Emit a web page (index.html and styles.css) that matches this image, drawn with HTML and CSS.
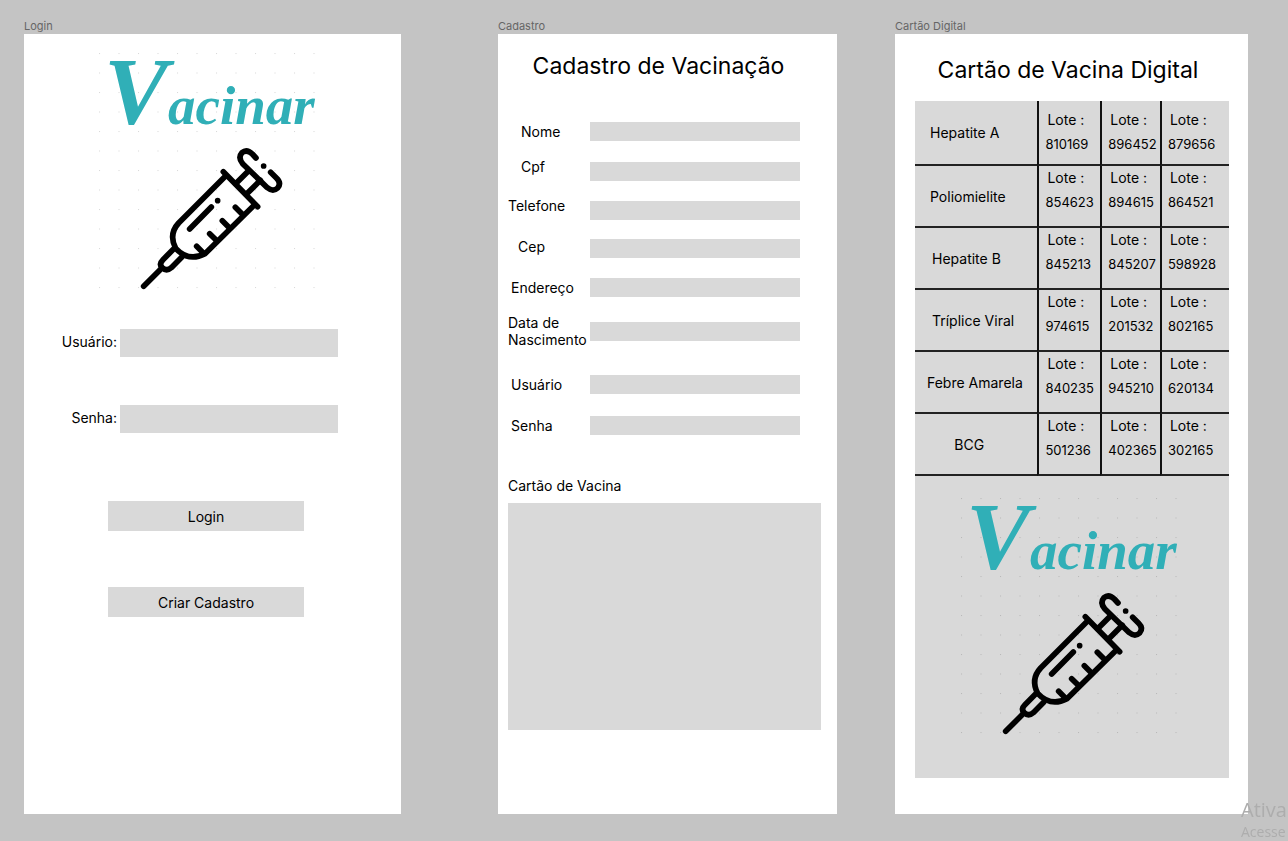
FILE: index.html
```html
<!DOCTYPE html>
<html lang="pt-BR">
<head>
<meta charset="utf-8">
<meta name="viewport" content="width=device-width, initial-scale=1">
<title>Vacinar</title>
<link rel="stylesheet" href="styles.css">
</head>
<body>
<main class="board">
  <section class="frame frame-login">
    <p class="frame-name">Login</p>
    <div class="screen">
      <svg class="logo" viewBox="0 0 240 270" role="img" aria-label="Vacinar">
        <defs>
          <pattern id="dots" x="9" y="19" width="19.5" height="19.5" patternUnits="userSpaceOnUse">
            <rect class="dot" width="1" height="1"/>
          </pattern>
          <g id="brand">
            <rect x="9" y="19" width="217" height="236" fill="url(#dots)"/>
            <text class="wordmark" x="14" y="90"><tspan class="wordmark-initial">V</tspan>acinar</text>
            <g class="syringe" transform="translate(0 101) scale(.3333)">
              <path d="M161 454L215 400"/>
              <path d="M250 343L219 374Q206 387 216 397Q229 411 244 398L275 367"/>
              <path d="M406 124L266 264Q235 298 257 340Q296 382 345 356L494 209"/>
              <path d="M400 110L503 215"/>
              <path d="M436 217L457 238M397 257L418 278M359 296L379 316M320 334L340 354"/>
              <path d="M299 282L364 216M383 197v.1"/>
              <path d="M437 146L476 107M472 175L511 136"/>
              <path d="M498 69L487 57Q470 41 456 53Q443 68 458 86L532 158Q549 172 563 159Q575 145 560 130L542 112M521 93v.1"/>
            </g>
          </g>
        </defs>
        <use href="#brand"/>
      </svg>
      <form class="login-form">
        <div class="login-row"><label class="lifted" for="login-user">Usuário:</label><input id="login-user" type="text"></div>
        <div class="login-row"><label class="lifted" for="login-pass">Senha:</label><input id="login-pass" type="password"></div>
        <div class="actions">
          <button type="submit">Login</button>
          <button type="button">Criar Cadastro</button>
        </div>
      </form>
    </div>
  </section>

  <section class="frame frame-signup">
    <p class="frame-name">Cadastro</p>
    <div class="screen">
      <h1>Cadastro de Vacinação</h1>
      <form class="signup-form">
        <div class="row"><label class="indent-l" for="nome">Nome</label><input id="nome" type="text"></div>
        <div class="row"><label class="indent-l raised" for="cpf">Cpf</label><input id="cpf" type="text"></div>
        <div class="row row-short"><label class="raised" for="tel">Telefone</label><input id="tel" type="tel"></div>
        <div class="row row-short"><label class="indent-m lifted" for="cep">Cep</label><input id="cep" type="text"></div>
        <div class="row"><label class="indent-s" for="end">Endereço</label><input id="end" type="text"></div>
        <div class="row row-tall"><label for="nasc">Data de<br>Nascimento</label><input id="nasc" type="text"></div>
        <div class="row row-spaced"><label class="indent-s" for="user">Usuário</label><input id="user" type="text"></div>
        <div class="row row-last"><label class="indent-s" for="pass">Senha</label><input id="pass" type="password"></div>
      </form>
      <h2>Cartão de Vacina</h2>
      <div class="card-preview"></div>
    </div>
  </section>

  <section class="frame frame-card">
    <p class="frame-name">Cartão Digital</p>
    <div class="screen">
      <h1>Cartão de Vacina Digital</h1>
      <div class="card">
        <table>
          <colgroup><col class="col-name"><col class="col-a"><col class="col-b"><col class="col-c"></colgroup>
          <tbody>
            <tr class="first"><th scope="row">Hepatite A</th><td><span>Lote :</span>810169</td><td><span>Lote :</span>896452</td><td><span>Lote :</span>879656</td></tr>
            <tr><th scope="row">Poliomielite</th><td><span>Lote :</span>854623</td><td><span>Lote :</span>894615</td><td><span>Lote :</span>864521</td></tr>
            <tr><th class="inset" scope="row">Hepatite B</th><td><span>Lote :</span>845213</td><td><span>Lote :</span>845207</td><td><span>Lote :</span>598928</td></tr>
            <tr><th class="inset" scope="row">Tríplice Viral</th><td><span>Lote :</span>974615</td><td><span>Lote :</span>201532</td><td><span>Lote :</span>802165</td></tr>
            <tr><th class="outset" scope="row">Febre Amarela</th><td><span>Lote :</span>840235</td><td><span>Lote :</span>945210</td><td><span>Lote :</span>620134</td></tr>
            <tr><th class="centered" scope="row">BCG</th><td><span>Lote :</span>501236</td><td><span>Lote :</span>402365</td><td><span>Lote :</span>302165</td></tr>
          </tbody>
        </table>
        <svg class="logo logo-card" viewBox="0 0 240 270" role="img" aria-label="Vacinar"><use href="#brand"/></svg>
      </div>
    </div>
  </section>
</main>
<aside class="watermark"><p class="watermark-title">Ativa</p><p>Acesse</p></aside>
</body>
</html>
```

FILE: styles.css
```css
* { box-sizing: border-box; }
body {
  margin: 0;
  min-height: 100vh;
  background: #c4c4c4;
  color: #000;
  font: 14px/17px Inter, sans-serif;
}
p, h1, h2 { margin: 0; font-weight: 400; }

.board { display: flex; align-items: stretch; padding: 18px 40px 27px 24px; }
.frame { display: flex; flex-direction: column; min-width: 0; }
.frame-login { flex: 377 1 0; margin-right: 97px; }
.frame-signup { flex: 339 1 0; margin-right: 58px; }
.frame-card { flex: 353 1 0; }
.frame-name { font-size: 11px; line-height: 16px; color: #666; }
.screen { flex: 1; background: #fff; }

h1 { font-size: 23px; line-height: 28px; text-align: center; }
h2 { font-size: 14px; line-height: 17px; }
input { min-width: 0; padding: 0 8px; border: 0; border-radius: 0; background: #d9d9d9; font: inherit; }

.logo { display: block; width: 240px; height: 270px; margin: 0 auto; }
.dot { fill: #000; fill-opacity: .15; }
.wordmark { fill: #30afb7; font: italic 700 55px "Liberation Serif", serif; }
.wordmark-initial { font-size: 96px; }
.syringe { fill: none; stroke: #000; stroke-width: 17; stroke-linecap: round; stroke-linejoin: round; }

.lifted { padding-bottom: 4px; }
.frame-login .screen { padding-right: 6px; }
.login-form { display: flex; flex-direction: column; gap: 48px; padding: 25px 57px 0 37px; }
.login-row { display: flex; align-items: center; gap: 3px; }
.login-row label { flex: 0 0 56px; text-align: right; }
.login-row input { flex: 1; height: 28px; }
.actions { display: flex; flex-direction: column; gap: 56px; padding: 20px 34px 0 47px; }
.actions button { height: 30px; padding: 0; border: 0; background: #d9d9d9; color: #000; font: inherit; }

.frame-signup .screen { padding: 18px 16px 84px 10px; }
.frame-signup h1 { padding-right: 12px; }
.signup-form { padding: 31px 21px 0 0; }
.row { display: flex; align-items: center; height: 40px; }
.row-short { height: 38px; }
.row-tall { height: 48px; }
.row-spaced { height: 58px; }
.row-last { height: 24px; }
.row label { flex: 0 0 82px; }
.row input { flex: 1; height: 19px; }
.row .indent-s { padding-left: 3px; }
.row .indent-m { padding-left: 10px; }
.row .indent-l { padding-left: 13px; }
.row .raised { padding-bottom: 10px; }
.frame-signup h2 { padding: 40px 0 9px; }
.card-preview { height: 227px; background: #d9d9d9; }

.frame-card .screen { padding: 22px 19px 35px 20px; }
.frame-card h1 { padding-right: 8px; margin-bottom: 17px; }
.card { padding-bottom: 29px; background: #d9d9d9; }
table { width: 100%; table-layout: fixed; border-collapse: separate; border-spacing: 0; }
.col-name { width: 39%; }
.col-a { width: 20%; }
.col-b { width: 19%; }
tr { height: 62px; }
.first { height: 65px; }
th { padding: 0 0 0 15px; border-bottom: 2px solid #222; font-weight: 400; text-align: left; }
.inset { padding-left: 17px; }
.outset { padding-left: 12px; }
.centered { padding: 0 14px 0 0; text-align: center; }
td { padding: 0 0 0 6px; border-bottom: 2px solid #222; border-left: 2px solid #111; font-size: 13px; line-height: 24px; vertical-align: top; }
.first td { padding-top: 7px; }
td span { display: block; padding-left: 2px; font-size: 14px; }
.logo-card { margin-top: 3px; }

.watermark { position: fixed; right: 0; bottom: 0; width: 47px; color: #adadad; font: 14px/18px "Open Sans", sans-serif; }
.watermark-title { font-size: 20px; line-height: 26px; }
```
